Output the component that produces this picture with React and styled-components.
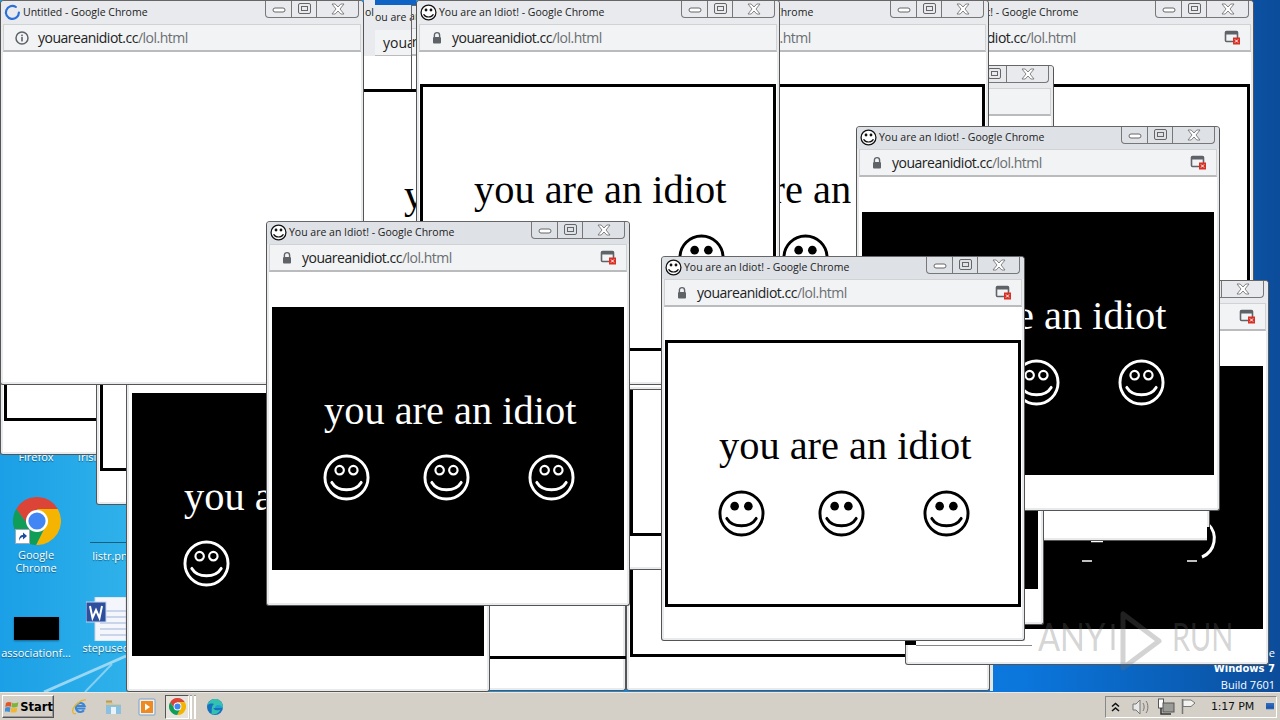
import React from "react";
import styled, { createGlobalStyle } from "styled-components";

const Global = createGlobalStyle`
  html, body { margin: 0; padding: 0; width: 1280px; height: 720px; overflow: hidden; }
  #root { width: 1280px; height: 720px; }
`;

const Screen = styled.div`
  width: 1280px; height: 720px; display: flex; flex-direction: column; overflow: hidden;
  font-family: "Open Sans", sans-serif;
`;
const Desktop = styled.div`
  position: relative; flex: 1; overflow: hidden;
  background: linear-gradient(90deg, #1b9fe6 0%, #2fb2ea 10%, #1690e4 40%, #0b76dc 80%, #0a5fb8 92%, #0c4c9a 100%);
`;
const Streaks = styled.svg`
  position: absolute; left: 0; top: 600px; width: 130px; height: 92px;
`;
const DesktopIcon = styled.div`
  position: absolute; left: ${p => p.$x}px; top: ${p => p.$y}px; width: ${p => p.$w}px;
  display: flex; flex-direction: column; align-items: center;
`;
const IconLabel = styled.div`
  color: #fff; font: 11px/13px "Open Sans", sans-serif; text-align: center;
  white-space: nowrap; text-shadow: 0 1px 1px rgba(0,0,0,.45);
`;
const BlackThumb = styled.div`
  width: 45px; height: 23px; background: #000; box-shadow: 0 1px 2px rgba(0,0,0,.4); margin-bottom: 6px;
`;
const Corner = styled.div`
  position: absolute; right: 5px; bottom: -1px; text-align: right; color: #fff; line-height: 16px;
`;
const CornerBold = styled.div`font: bold 10px/16px "DejaVu Sans", sans-serif;`;
const CornerThin = styled.div`font: 11px/16px "Open Sans", sans-serif;`;

const Win = styled.section`
  position: absolute; left: ${p => p.$x}px; top: ${p => p.$y}px; width: 364px; height: 385px;
  box-sizing: border-box; display: flex; flex-direction: column;
  border: 1px solid #555; border-top-color: #666; border-radius: 4px 4px 3px 3px;
  background: #e9eaec; padding: 0 2px 2px; overflow: hidden;
`;
const TitleBar = styled.header`
  height: ${p => p.$top ? 23 : 22}px; flex: none; display: flex; align-items: flex-start; margin: 0 -2px; padding-left: 3px;
  background: ${p => p.$active ? "#dee1e6" : "#e8eaed"};
`;
const TitleIcon = styled.div`
  width: 17px; height: 17px; margin: ${p => p.$top ? 3 : 2}px 2px 0 0; flex: none; display: flex;
`;
const TitleText = styled.div`
  font: 10.5px/21px "Open Sans", sans-serif; color: #222; white-space: nowrap; flex: 1;
  padding-top: ${p => p.$top ? 1 : 0}px;
`;
const Controls = styled.div`
  flex: none; display: flex; height: 18px; margin-right: 4px; margin-top: -1px; box-sizing: border-box;
  border: 1px solid #777; border-top: 0; border-radius: 0 0 4px 4px;
`;
const Ctl = styled.div`
  width: ${p => p.$w}px; display: flex; align-items: center; justify-content: center;
  border-left: ${p => p.$first ? "0" : "1px solid #777"}; box-sizing: border-box;
`;
const UrlBar = styled.div`
  height: 28px; flex: none; display: flex; align-items: center; background: #f1f3f4;
  border: 1px solid #d0d2d4; border-bottom: 2px solid #b9bbbd; box-sizing: border-box; padding: 0 9px 0 9px;
`;
const UrlIcon = styled.div`
  width: 16px; height: 16px; flex: none; display: flex;
  margin: 0 ${p => p.$info ? 8 : 7}px 0 ${p => p.$info ? 1 : 0}px;
`;
const Url = styled.div`
  font: 14px/20px "Open Sans", sans-serif; letter-spacing: -.5px; color: #222; flex: 1; white-space: nowrap;
`;
const UrlPath = styled.span`color: #6b6e72;`;
const Page = styled.div`
  flex: 1; background: #fff; min-height: 0;
  padding: ${p => (p.$dark ? 35 : 33) - (p.$top ? 1 : 0)}px ${p => p.$dark ? 3 : 1}px 0;
`;
const AdBox = styled.div`
  position: relative;
  box-sizing: border-box; height: ${p => p.$dark ? 263 : 267}px;
  background: ${p => p.$dark ? "#000" : "#fff"};
  color: ${p => p.$dark ? "#fff" : "#000"};
  border: ${p => p.$dark ? "0" : "3px solid #000"};
  padding: ${p => p.$dark ? "82px 0 0 52px" : "81px 0 0 51px"};
`;
const Phrase = styled.div`
  font: 40.4px/44px "Liberation Serif", serif; width: 253px; overflow: hidden; white-space: nowrap;
`;
const Smileys = styled.div`
  display: flex; gap: 53px; margin: ${p => p.$dark ? 21 : 22}px 0 0 -1px;
`;
const Third = styled.div`margin-left: 5px; display: flex;`;

const Artifact = styled.div`
  position: absolute; left: ${p => p.$x}px; top: ${p => p.$y}px; width: ${p => p.$w}px; height: ${p => p.$h}px;
  background: ${p => p.$bg};
`;
const Sliver = styled.div`
  position: absolute; left: 375px; top: 5px; width: 36px; height: 51px; overflow: hidden; background: #e8eaed;
  border-right: 1px solid #666;
`;
const SliverTitle = styled.div`
  font: 10.5px/24px "Open Sans", sans-serif; color: #222; white-space: nowrap; height: 25px;
`;
const SliverUrl = styled.div`
  font: 14px/25px "Open Sans", sans-serif; color: #222; background: #f1f3f4; height: 26px; padding-left: 8px;
  border-bottom: 1px solid #bbb; box-sizing: border-box; white-space: nowrap;
`;
const Behind = styled.div`
  position: absolute; left: 365px; top: 6px; font: 10.5px/12px "Open Sans", sans-serif; color: #222;
`;
const Fragments = styled.svg`
  position: absolute; left: 0; top: 0; width: 352px; height: 263px; pointer-events: none;
`;

const Watermark = styled.div`
  position: absolute; left: 1038px; top: 610px; display: flex; align-items: flex-start;
  color: rgba(110,110,110,.3); pointer-events: none;
`;
const MarkText = styled.span`
  font: 400 38px/52px "Lato", sans-serif; transform: scaleX(${p => p.$s}); transform-origin: left center;
  display: inline-block; width: ${p => p.$w}px; margin-left: ${p => p.$m}px;
`;

const Taskbar = styled.footer`
  height: 28px; flex: none; background: #d4d0c8; display: flex; align-items: center; padding: 0 3px 0 2px;
  box-sizing: border-box; border-top: 1px solid #ece9e2;
`;
const StartBtn = styled.div`
  width: 52px; height: 23px; box-sizing: border-box; display: flex; align-items: center; gap: 1px; padding-left: 2px;
  border: 1px solid; border-color: #fff #555 #555 #fff; box-shadow: inset -1px -1px 0 #999;
  font: bold 11.5px "DejaVu Sans", sans-serif; color: #000;
`;
const QuickLaunch = styled.div`
  display: flex; align-items: center; margin-left: 9px;
`;
const Quick = styled.div`
  width: ${p => p.$w}px; display: flex; justify-content: center;
`;
const Pressed = styled.div`
  width: 24px; height: 24px; display: flex; align-items: center; justify-content: center; box-sizing: border-box;
  border: 1px solid; border-color: #555 #fff #fff #555; background: #e7e4de; margin-left: 1px;
`;
const Grip = styled.div`
  width: 8px; height: 24px; margin-right: 7px; box-sizing: border-box; display: flex; justify-content: space-between;
  padding: 0 1px;
`;
const GripBar = styled.div`
  width: 2px; height: 24px; background: #fff; border-top: 1px solid #999; box-sizing: border-box;
`;
const Tray = styled.div`
  margin-left: auto; width: 172px; height: 22px; box-sizing: border-box; display: flex; align-items: center;
  border: 1px solid; border-color: #888 #fff #fff #888; padding: 0 2px 0 5px; position: relative;
`;
const TrayIcon = styled.div`
  display: flex; margin-right: ${p => p.$gap}px;
`;
const Clock = styled.div`
  font: 11px "DejaVu Sans", sans-serif; color: #111; white-space: nowrap; letter-spacing: -.2px; margin-right: 12px;
`;
const ChromeWrap = styled.div`position: relative; display: flex; margin: 0 0 3px 2px;`;
const Shortcut = styled.div`
  position: absolute; left: 2px; bottom: 1px; width: 13px; height: 13px; background: #fff; border: 1px solid #9ab;
  display: flex; align-items: center; justify-content: center;
`;

const Smiley = ({ dark, size = 47 }) => {
  const c = dark ? "#fff" : "#000";
  return (
    <svg width={size} height={size} viewBox="-24 -24 48 48" fill="none">
      <circle r="22" stroke={c} strokeWidth="3" />
      {dark ? (
        <>
          <circle cx="-7" cy="-7.5" r="4.3" stroke={c} strokeWidth="2.2" />
          <circle cx="7" cy="-7.5" r="4.3" stroke={c} strokeWidth="2.2" />
        </>
      ) : (
        <>
          <circle cx="-7" cy="-7.5" r="4.4" fill={c} />
          <circle cx="7" cy="-7.5" r="4.4" fill={c} />
        </>
      )}
      <path d="M-15 5 C-9 15 9 15 15 5" stroke={c} strokeWidth="3" strokeLinecap="round" />
    </svg>
  );
};

const Favicon = () => (
  <svg width="17" height="17" viewBox="-24 -24 48 48" fill="none">
    <circle r="21" fill="#fff" stroke="#111" strokeWidth="3.6" />
    <circle cx="-7" cy="-7" r="4" fill="#111" />
    <circle cx="7" cy="-7" r="4" fill="#111" />
    <path d="M-13 6 C-8 15 8 15 13 6" stroke="#111" strokeWidth="3.4" strokeLinecap="round" />
  </svg>
);
const Spinner = () => (
  <svg width="17" height="17" viewBox="0 0 17 17" fill="none">
    <path d="M11.8 2.9 A6.5 6.5 0 1 0 14.9 8.5" stroke="#2a70d8" strokeWidth="2.2" strokeLinecap="round" />
  </svg>
);
const LockIcon = () => (
  <svg width="16" height="16" viewBox="0 0 16 16">
    <path d="M5.4 7V5.2a2.6 2.6 0 0 1 5.2 0V7" fill="none" stroke="#5f6368" strokeWidth="1.4" />
    <rect x="4" y="7" width="8" height="6.6" rx="1" fill="#5f6368" />
  </svg>
);
const InfoIcon = () => (
  <svg width="16" height="16" viewBox="0 0 16 16" fill="none">
    <circle cx="8" cy="8" r="6" stroke="#5f6368" strokeWidth="1.5" />
    <rect x="7.2" y="7" width="1.6" height="4.4" fill="#5f6368" />
    <rect x="7.2" y="4.6" width="1.6" height="1.6" fill="#5f6368" />
  </svg>
);
const BlockedPopup = () => (
  <svg width="17" height="17" viewBox="0 0 17 17">
    <rect x="1.5" y="2.5" width="12" height="10" rx="1" fill="none" stroke="#5f6368" strokeWidth="1.6" />
    <rect x="1.5" y="2.5" width="12" height="3" fill="#5f6368" />
    <rect x="9" y="8.5" width="7" height="7" fill="#d93025" />
    <path d="M11 10.5l3 3M14 10.5l-3 3" stroke="#fff" strokeWidth="1" />
  </svg>
);
const MinGlyph = () => (
  <svg width="14" height="8" viewBox="0 0 14 8" fill="none"><rect x="1" y="3" width="12" height="4" rx="2" fill="#fff" stroke="#666" /></svg>
);
const MaxGlyph = () => (
  <svg width="13" height="12" viewBox="0 0 13 12" fill="none">
    <rect x=".5" y=".5" width="12" height="10" rx="1.5" stroke="#666" />
    <rect x="3.5" y="3.5" width="6" height="4" stroke="#666" />
  </svg>
);
const CloseGlyph = () => (
  <svg width="14" height="12" viewBox="0 0 14 12" fill="#fff" stroke="#777" strokeWidth=".9">
    <path d="M1 1h3.2L7 4l2.8-3H13L9 6l4 5H9.8L7 8l-2.8 3H1l4-5z" />
  </svg>
);

const ChromeLogo = ({ size }) => (
  <svg width={size} height={size} viewBox="-24 -24 48 48">
    <path d="M-20.8 -12 A24 24 0 0 1 20.8 -12 L0 -12 L-9 4 Z" fill="#db4437" />
    <path d="M20.8 -12 A24 24 0 0 1 -1 24 L9 4 L0 -12 Z" fill="#f4b400" />
    <path d="M-1 24 A24 24 0 0 1 -20.8 -12 L-9 4 L9 4 Z" fill="#0f9d58" />
    <circle r="11" fill="#fff" />
    <circle r="8.6" fill="#4285f4" />
  </svg>
);
const ShortcutArrow = () => (
  <svg width="11" height="11" viewBox="0 0 11 11"><path d="M2 10C2 5 4 4 6 4V1.5L10 5 6 8.5V6C4.5 6 3 7 2 10z" fill="#1b4f9c" /></svg>
);
const WordIcon = () => (
  <svg width="40" height="44" viewBox="0 0 40 44">
    <rect x="9" y="0" width="31" height="44" fill="#f4f6fb" stroke="#cdd5e5" />
    <path d="M14 14h26M14 20h26M14 26h26M14 32h26M14 38h26" stroke="#9db3d8" />
    <rect x="0" y="5" width="20" height="20" fill="#2c4f9e" stroke="#c8d4ee" />
    <path d="M4 9l2.5 12 3.5-8 3.5 8L16 9" fill="none" stroke="#fff" strokeWidth="2" />
  </svg>
);
const WinFlag = () => (
  <svg width="16" height="16" viewBox="0 0 16 16">
    <path d="M1 3.5C3 2 5 2 7.3 3L6.4 7.8C4.4 6.9 2.3 7 0.4 8z" fill="#e2562b" />
    <path d="M8 3.2C10 4.2 12 4.1 15 2.8L14 7.8C11.5 8.8 9 8.8 7.1 8z" fill="#7fb43a" />
    <path d="M0.3 8.8C2.3 7.8 4.3 7.8 6.2 8.7L5.3 13.6C3.4 12.7 1.4 12.7 -.4 13.6z" fill="#3d8fd8" />
    <path d="M7 8.9C9 9.7 11.5 9.7 13.9 8.6L12.9 13.5C10.5 14.5 8 14.5 6.1 13.8z" fill="#f2b632" />
  </svg>
);
const IEIcon = () => (
  <svg width="18" height="18" viewBox="0 0 18 18" fill="none">
    <path d="M14.4 10.5H5.3M5 8h8.6A4.5 4.5 0 1 0 12.9 12.3" stroke="#3b86d6" strokeWidth="2.2" />
    <path d="M15 2C12 1 5 5 2 11 1 14 2 16.500 5 15.500" stroke="#e3b52f" strokeWidth="1.3" />
  </svg>
);
const FolderIcon = () => (
  <svg width="17" height="18" viewBox="0 0 17 18">
    <path d="M1 4h6l1.500 2H16v10H1z" fill="#d8c68b" />
    <rect x="1" y="7" width="15" height="9" fill="#8cc0e0" />
    <rect x="6" y="9" width="5" height="7" fill="#e8f2f8" />
    <rect x="1" y="2.500" width="6" height="2" fill="#b79c5b" />
  </svg>
);
const PlayerIcon = () => (
  <svg width="18" height="18" viewBox="0 0 18 18">
    <rect x="1" y="1" width="16" height="16" rx="1" fill="#eaf1f8" stroke="#7aa0c8" />
    <rect x="3" y="3" width="12" height="12" fill="#ef8a20" />
    <path d="M7 5.500l5 3.500-5 3.500z" fill="#fff" />
  </svg>
);
const EdgeIcon = () => (
  <svg width="18" height="18" viewBox="0 0 18 18">
    <circle cx="9" cy="9" r="8" fill="#1570c0" />
    <path d="M1.500 7C3 2 8 0 12 1.500c3.500 1.300 5.500 5 5 8.500H7.500c.5 2.500 4 3 7 1.500-1.500 4-6 6-9.500 4C7 15 4 9 8 6 5 5 3 6 1.500 7z" fill="#35c1b0" />
    <path d="M12 7c2 0 4 1 5 3H9c0-1.500 1.300-3 3-3z" fill="#1f9fd8" />
  </svg>
);
const Chevrons = () => (
  <svg width="9" height="10" viewBox="0 0 9 10" fill="none" stroke="#111" strokeWidth="1.600"><path d="M1 4.500l3.500-3 3.500 3M1 9l3.500-3 3.500 3" /></svg>
);
const Speaker = () => (
  <svg width="18" height="16" viewBox="0 0 18 16" fill="#e8e8e8" stroke="#777"><path d="M1 5h3l4-4v14l-4-4H1z" /><path d="M11 4c1.500 2 1.500 6 0 8M14 2c2.500 3 2.500 9 0 12" fill="none" /></svg>
);
const Network = () => (
  <svg width="18" height="18" viewBox="0 0 18 18">
    <rect x="1.500" y="1" width="5" height="9" fill="#fff" stroke="#555" />
    <rect x="6" y="5" width="11" height="9" fill="#9a9a96" stroke="#555" />
    <path d="M4 10v6h10" fill="none" stroke="#333" strokeWidth="1.500" />
  </svg>
);
const FlagIcon = () => (
  <svg width="16" height="17" viewBox="0 0 16 17" fill="none" stroke="#777"><path d="M1.500 1v15" strokeWidth="1.500" /><path d="M2 2h8l4 3-4 3.500H2z" fill="#f2f2f0" /></svg>
);
const Thumb = () => (
  <svg width="15" height="13" viewBox="0 0 15 13"><defs><linearGradient id="t" x1="0" y1="0" x2="0" y2="1"><stop offset="0" stopColor="#2f6fc8" /><stop offset="1" stopColor="#1a4f9e" /></linearGradient></defs><rect width="15" height="11" fill="url(#t)" /><rect y="11" width="15" height="2" fill="#9fb4d0" /></svg>
);
const PlayMark = () => (
  <svg width="62" height="62" viewBox="0 0 62 62" fill="none" stroke="rgba(110,110,110,.3)" strokeWidth="5">
    <path d="M15 4V58L51 31z" strokeLinejoin="round" />
    <path d="M5 14V40" strokeWidth="3" />
  </svg>
);

const Window = ({ x, y, dark, blank, empty, title = "You are an Idiot! - Google Chrome", active, children, noPopup }) => {
  const atTop = y === 0;
  return (
    <Win $x={x} $y={y}>
      <TitleBar $active={active} $top={atTop}>
        <TitleIcon $top={atTop}>{blank ? <Spinner /> : <Favicon />}</TitleIcon>
        <TitleText $top={atTop}>{title}</TitleText>
        <Controls>
          <Ctl $w={25} $first><MinGlyph /></Ctl>
          <Ctl $w={25}><MaxGlyph /></Ctl>
          <Ctl $w={42}><CloseGlyph /></Ctl>
        </Controls>
      </TitleBar>
      <UrlBar>
        <UrlIcon $info={blank}>{blank ? <InfoIcon /> : <LockIcon />}</UrlIcon>
        <Url>youareanidiot.cc<UrlPath>/lol.html</UrlPath></Url>
        {!blank && !noPopup && <BlockedPopup />}
      </UrlBar>
      <Page $dark={dark} $top={atTop}>
        {!blank && !empty && (
          <AdBox $dark={dark}>
            {children || (
              <>
                <Phrase>you are an idiot</Phrase>
                <Smileys $dark={dark}>
                  <Smiley dark={dark} />
                  <Smiley dark={dark} />
                  <Third><Smiley dark={dark} /></Third>
                </Smileys>
              </>
            )}
          </AdBox>
        )}
      </Page>
    </Win>
  );
};

export default function App() {
  return (
    <Screen>
      <Global />
      <Desktop>
        <Streaks viewBox="0 0 130 92" fill="none">
          <path d="M44 92L126 56" stroke="#bfe6f7" strokeWidth="3" opacity=".75" />
          <path d="M85 92L112 64" stroke="#bfe6f7" strokeWidth="2" opacity=".6" />
        </Streaks>
        <DesktopIcon $x={6} $y={450} $w={60}><IconLabel>Firefox</IconLabel></DesktopIcon>
        <DesktopIcon $x={76} $y={450} $w={22}><IconLabel>Irisi</IconLabel></DesktopIcon>
        <DesktopIcon $x={6} $y={497} $w={60}>
          <ChromeWrap>
            <ChromeLogo size={48} />
            <Shortcut><ShortcutArrow /></Shortcut>
          </ChromeWrap>
          <IconLabel>Google<br />Chrome</IconLabel>
        </DesktopIcon>
        <Artifact $x={90} $y={542} $w={40} $h={1} $bg="#12607f" />
        <DesktopIcon $x={85} $y={549} $w={50}><IconLabel>listr.pn</IconLabel></DesktopIcon>
        <DesktopIcon $x={0} $y={617} $w={72}>
          <BlackThumb />
          <IconLabel>associationf…</IconLabel>
        </DesktopIcon>
        <DesktopIcon $x={80} $y={597} $w={52}>
          <WordIcon />
          <IconLabel>stepused</IconLabel>
        </DesktopIcon>
        <Corner>
          <CornerThin>Test Mode</CornerThin>
          <CornerBold>Windows 7</CornerBold>
          <CornerThin>Build 7601</CornerThin>
        </Corner>
        <Artifact $x={990} $y={655} $w={3} $h={36} $bg="#e6e6e6" />

        <Window x={0} y={70} />
        <Window x={96} y={120} />
        <Window x={262} y={306} empty />
        <Artifact $x={490} $y={656} $w={136} $h={3} $bg="#000" />
        <Window x={626} y={306} />
        <Window x={626} y={185} />
        <Window x={126} y={307} dark />
        <Window x={890} y={0} />
        <Window x={690} y={65} noPopup />
        <Window x={905} y={280} dark>
          <Fragments viewBox="0 0 352 263" fill="none" stroke="#fff" strokeWidth="2.500">
            <path d="M297 158 A20 20 0 0 1 291 191" strokeWidth="3" />
            <path d="M180 175.500h12M171 195h10M276 195h10" strokeWidth="1.500" />
          </Fragments>
        </Window>
        <Artifact $x={905} $y={641} $w={11} $h={4} $bg="#000" />
        <Artifact $x={916} $y={645} $w={116} $h={1} $bg="#888" />
        <Window x={846} y={156} dark />
        <Artifact $x={1207} $y={527} $w={3} $h={14} $bg="#000" />
        <Window x={680} y={240} dark />
        <Window x={625} y={0} noPopup />
        <Window x={346} y={5} noPopup />
        <Artifact $x={364} $y={0} $w={11} $h={56} $bg="#e8eaed" />
        <Behind>ol</Behind>
        <Artifact $x={375} $y={0} $w={41} $h={5} $bg="#0f63c4" />
        <Sliver>
          <SliverTitle>ou are an Idiot!</SliverTitle>
          <SliverUrl>youareanidiot</SliverUrl>
        </Sliver>
        <Artifact $x={411} $y={56} $w={1} $h={33} $bg="#555" />
        <Window x={416} y={0} noPopup />
        <Window x={0} y={0} blank title="Untitled - Google Chrome" />
        <Window x={856} y={126} dark active />
        <Window x={266} y={221} dark active />
        <Window x={661} y={256} active />

        <Watermark>
          <MarkText $w={70} $s={.86} $m={0}>ANY</MarkText>
          <PlayMark />
          <MarkText $w={62} $s={.76} $m={2}>RUN</MarkText>
        </Watermark>
      </Desktop>
      <Taskbar>
        <StartBtn><WinFlag />Start</StartBtn>
        <QuickLaunch>
          <Quick $w={34}><IEIcon /></Quick>
          <Quick $w={33}><FolderIcon /></Quick>
          <Quick $w={34}><PlayerIcon /></Quick>
          <Pressed><ChromeLogo size={17} /></Pressed>
          <Grip><GripBar /><GripBar /></Grip>
          <Quick $w={22}><EdgeIcon /></Quick>
        </QuickLaunch>
        <Tray>
          <TrayIcon $gap={12}><Chevrons /></TrayIcon>
          <TrayIcon $gap={7}><Speaker /></TrayIcon>
          <TrayIcon $gap={6}><Network /></TrayIcon>
          <TrayIcon $gap={14}><FlagIcon /></TrayIcon>
          <Clock>1:17 PM</Clock>
          <Thumb />
        </Tray>
      </Taskbar>
    </Screen>
  );
}
